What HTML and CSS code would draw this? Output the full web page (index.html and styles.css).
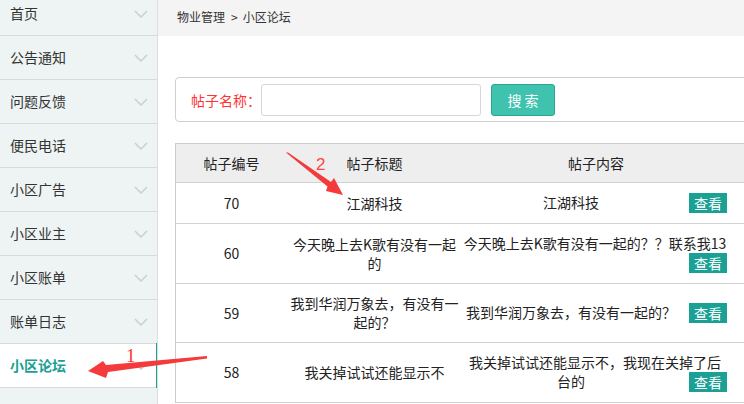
FILE: index.html
```html
<!DOCTYPE html>
<html lang="zh-CN">
<head>
    <meta charset="UTF-8">
    <meta name="viewport" content="width=device-width, initial-scale=1.0">
    <title>小区论坛</title>
    <link rel="stylesheet" href="styles.css">
</head>
<body>
    <div class="layout">
        <div class="sidebar">
            <ul class="menu">
                <li>首页<svg class="seta" viewBox="0 0 14 8"><polyline points="1,1 7,7 13,1"/></svg></li>
                <li>公告通知<svg class="seta" viewBox="0 0 14 8"><polyline points="1,1 7,7 13,1"/></svg></li>
                <li>问题反馈<svg class="seta" viewBox="0 0 14 8"><polyline points="1,1 7,7 13,1"/></svg></li>
                <li>便民电话<svg class="seta" viewBox="0 0 14 8"><polyline points="1,1 7,7 13,1"/></svg></li>
                <li>小区广告<svg class="seta" viewBox="0 0 14 8"><polyline points="1,1 7,7 13,1"/></svg></li>
                <li>小区业主<svg class="seta" viewBox="0 0 14 8"><polyline points="1,1 7,7 13,1"/></svg></li>
                <li>小区账单<svg class="seta" viewBox="0 0 14 8"><polyline points="1,1 7,7 13,1"/></svg></li>
                <li>账单日志<svg class="seta" viewBox="0 0 14 8"><polyline points="1,1 7,7 13,1"/></svg></li>
                <li class="ativo">小区论坛<svg class="seta" viewBox="0 0 14 8"><polyline points="1,1 7,7 13,1"/></svg></li>
                <li></li>
            </ul>
        </div>

        <div class="principal">
            <div class="migalhas">物业管理<span class="sep">&gt;</span>小区论坛</div>

            <div class="pesquisa">
                <label for="nome">帖子名称：</label>
                <input type="text" id="nome">
                <button class="btn-pesquisa">搜 索</button>
            </div>

            <table class="tabela">
                <colgroup>
                    <col class="c-num">
                    <col class="c-titulo">
                    <col class="c-conteudo">
                    <col>
                </colgroup>
                <thead>
                    <tr>
                        <th>帖子编号</th>
                        <th>帖子标题</th>
                        <th>帖子内容</th>
                        <th></th>
                    </tr>
                </thead>
                <tbody>
                    <tr>
                        <td>70</td>
                        <td>江湖科技</td>
                        <td class="conteudo">江湖科技<span class="btn-ver">查看</span></td>
                        <td></td>
                    </tr>
                    <tr>
                        <td>60</td>
                        <td>今天晚上去K歌有没有一起的</td>
                        <td class="conteudo">今天晚上去K歌有没有一起的？？联系我13<span class="btn-ver">查看</span></td>
                        <td></td>
                    </tr>
                    <tr>
                        <td>59</td>
                        <td>我到华润万象去，有没有一起的？</td>
                        <td class="conteudo">我到华润万象去，有没有一起的？<span class="btn-ver">查看</span></td>
                        <td></td>
                    </tr>
                    <tr>
                        <td>58</td>
                        <td>我关掉试试还能显示不</td>
                        <td class="conteudo">我关掉试试还能显示不，我现在关掉了后台的<span class="btn-ver">查看</span></td>
                        <td></td>
                    </tr>
                </tbody>
            </table>
        </div>
    </div>

    <!-- setas de anotação por cima da página -->
    <svg class="anotacoes" width="744" height="404" viewBox="0 0 744 404">
        <polygon points="88,371 103,361 106,365 207,356 207,358.5 108,372 106,378" />
        <text x="126" y="362" class="num-serif">1</text>
        <polygon points="343,195 326,191 327.5,186.5 286,152.5 288,152.5 331,182 334,178" />
        <text x="316" y="170" class="num-sans">2</text>
    </svg>
</body>
</html>
```

FILE: styles.css
```css
:root {
    --cor-verde: #1aa094;
    --cor-borda: #d2d2d2;
}

body {
    margin: 0;
    font-family: "Noto Sans CJK SC", "Noto Sans", sans-serif;
    font-size: 14px;
    color: #333;
    position: relative;
    overflow: hidden;
    height: 404px;
}

.layout {
    display: flex;
    height: 404px;
}

.sidebar {
    width: 157px;
    flex-shrink: 0;
    background: #edf4f3;
    border-right: 1px solid #dadfdf;
    overflow: hidden;
}

.menu {
    list-style: none;
    margin: -8px 0 0 0;
    padding: 0;
}

.menu li {
    position: relative;
    height: 43px;
    line-height: 43px;
    padding-left: 10px;
    border-bottom: 1px solid #d6dcdc;
    display: flex;
    align-items: center;
    justify-content: space-between;
    padding-right: 9px;
}

.menu li.ativo {
    background: white;
    color: var(--cor-verde);
    font-weight: bold;
}

.menu li.ativo::after {
    content: "";
    position: absolute;
    right: -1px;
    top: -1px;
    bottom: -1px;
    width: 2px;
    background: var(--cor-verde);
}

.seta {
    width: 14px;
    height: 8px;
    fill: none;
    stroke: #c9cccc;
    stroke-width: 1.4;
}

.principal {
    flex: 1;
    overflow: hidden;
}

.migalhas {
    height: 36px;
    line-height: 33px;
    background: #f4f4f4;
    padding-left: 19px;
    font-size: 12px;
    color: #333;
}

.migalhas .sep {
    margin: 0 5px 0 6px;
}

.pesquisa {
    width: 640px;
    height: 43px;
    margin: 41px 0 0 17px;
    border: 1px solid #cfcfcf;
    border-radius: 4px;
    display: flex;
    align-items: center;
    padding-left: 15px;
    box-sizing: content-box;
}

.pesquisa label {
    color: #f33;
    font-size: 14px;
}

.pesquisa input {
    height: 30px;
    margin: 0;
    padding: 0 5px;
    border: 1px solid #d6d6d6;
    border-radius: 3px;
    box-sizing: content-box;
    width: 208px;
}

.btn-pesquisa {
    margin-left: 10px;
    width: 64px;
    height: 32px;
    background: #3fc2ae;
    border: 1px solid #28a792;
    border-radius: 3px;
    color: white;
    font-family: inherit;
    font-size: 14px;
    padding: 0;
}

.tabela {
    margin: 21px 0 0 17px;
    width: 640px;
    table-layout: fixed;
    border-collapse: separate;
    border-spacing: 0;
    border-top: 1px solid #cccccc;
    border-left: 1px solid #cccccc;
}

.c-num { width: 111px; }
.c-titulo { width: 175px; }
.c-conteudo { width: 268px; }

.tabela th {
    height: 38px;
    padding: 0;
    background: #eeeeee;
    font-weight: normal;
    color: #222;
    border-bottom: 1px solid var(--cor-borda);
    line-height: 19px;
}

.tabela td {
    padding: 10px 2px;
    line-height: 19px;
    text-align: center;
    vertical-align: middle;
    border-bottom: 1px solid var(--cor-borda);
    color: #222;
}

.tabela td.conteudo {
    padding-left: 1px;
    padding-right: 3px;
}

.btn-ver {
    float: right;
    margin-left: 10px;
    height: 20px;
    line-height: 20px;
    padding: 0 5px;
    background: var(--cor-verde);
    color: white;
}

.anotacoes {
    position: absolute;
    left: 0;
    top: 0;
    pointer-events: none;
}

.anotacoes polygon {
    fill: #f43a3a;
}

.num-serif {
    font-family: "Liberation Serif", serif;
    font-size: 19px;
    fill: #f33;
}

.num-sans {
    font-family: "Liberation Sans", sans-serif;
    font-size: 17px;
    fill: #f44;
}
```
